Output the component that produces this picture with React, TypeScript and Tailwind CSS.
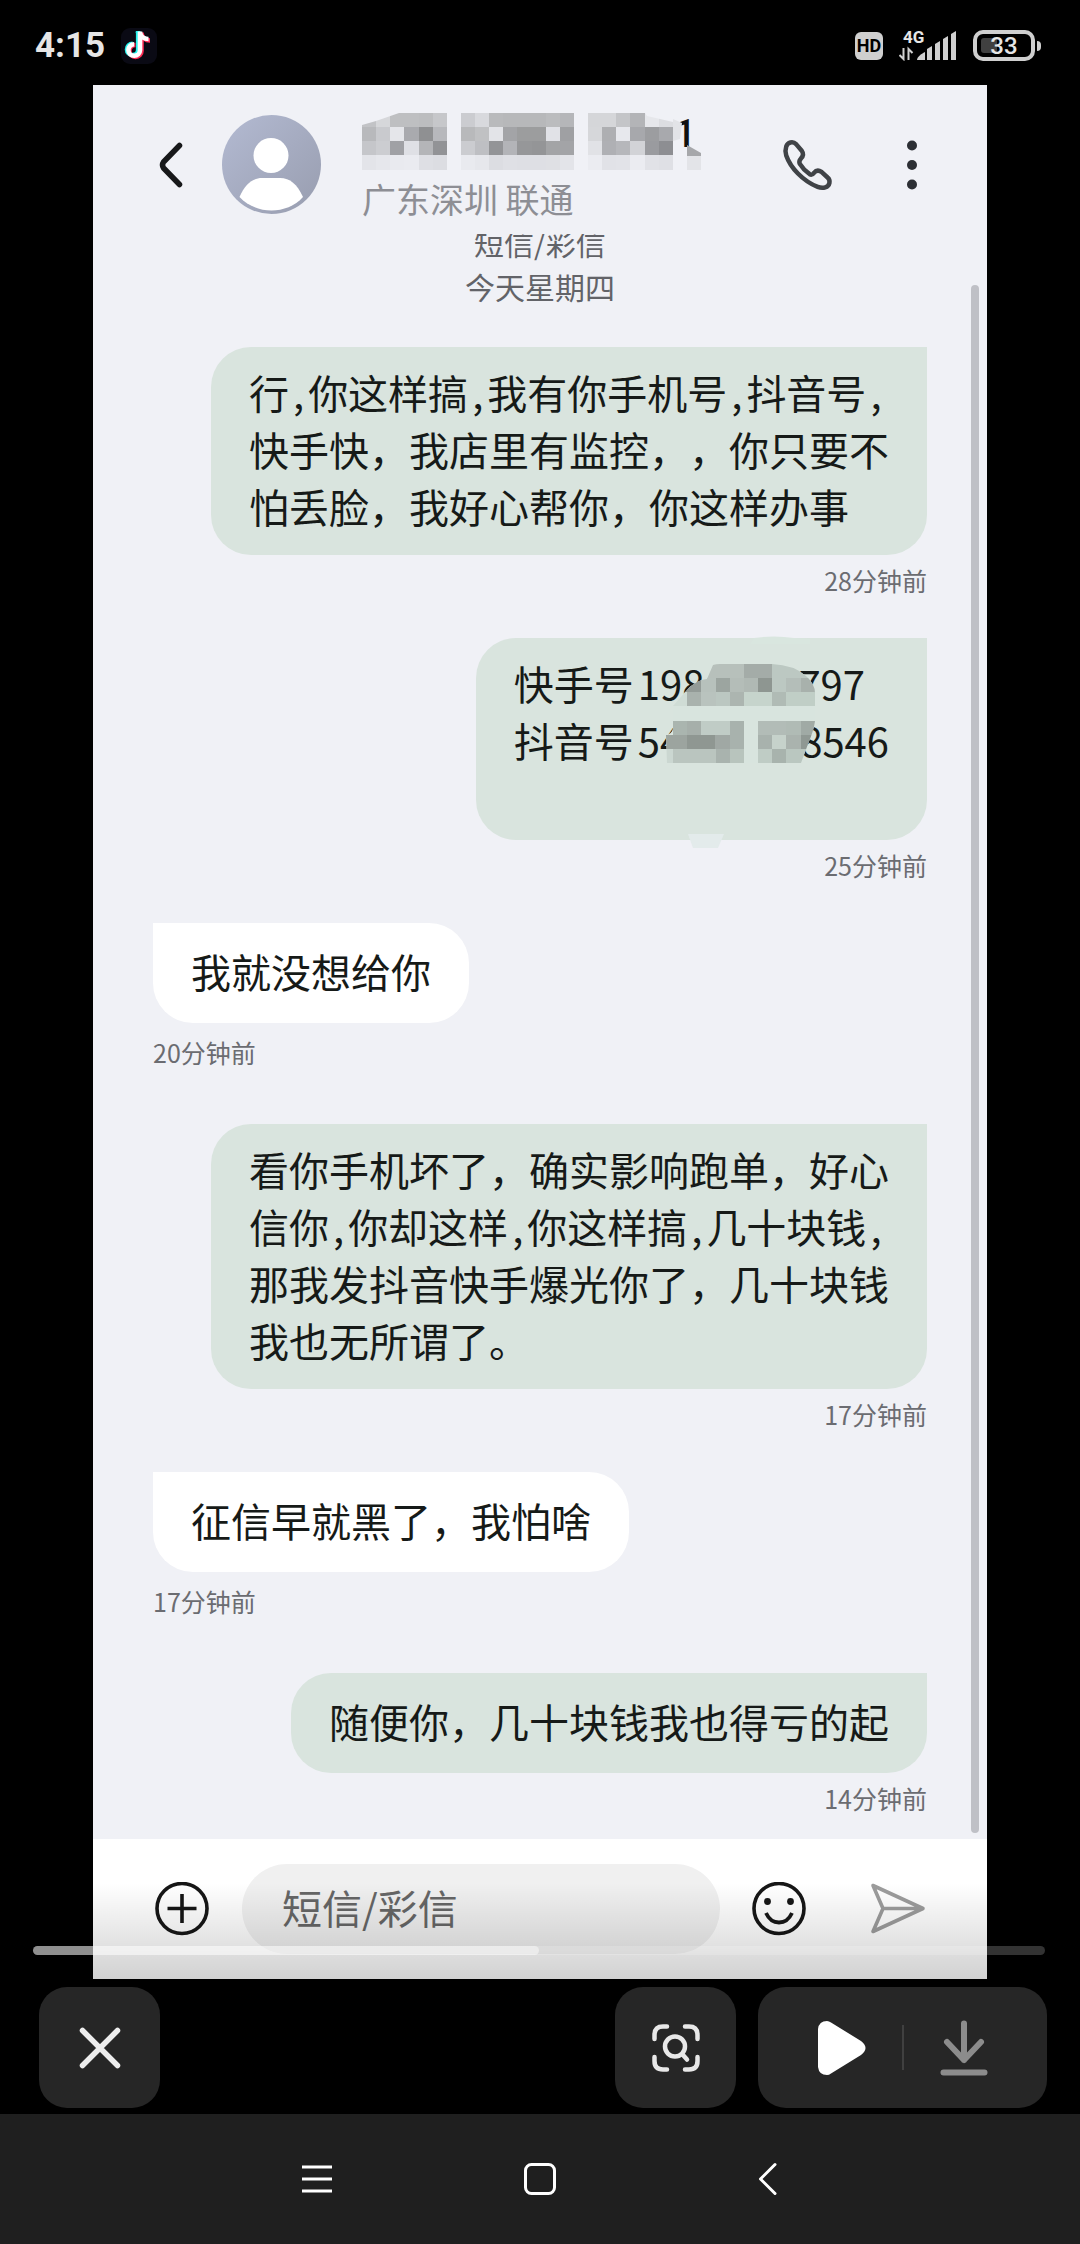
import React from 'react';

type Cell = [x: number, y: number, w: number, fill: string];

interface Message {
  id: number;
  from: 'me' | 'them';
  time: string;
  text?: string;
  accounts?: boolean;
}

const messages: Message[] = [
  {
    id: 1,
    from: 'me',
    time: '28分钟前',
    text: '行,你这样搞,我有你手机号,抖音号,\n快手快，我店里有监控，，你只要不\n怕丢脸，我好心帮你，你这样办事',
  },
  { id: 2, from: 'me', time: '25分钟前', accounts: true },
  { id: 3, from: 'them', time: '20分钟前', text: '我就没想给你' },
  {
    id: 4,
    from: 'me',
    time: '17分钟前',
    text: '看你手机坏了，确实影响跑单，好心\n信你,你却这样,你这样搞,几十块钱,\n那我发抖音快手爆光你了，几十块钱\n我也无所谓了。',
  },
  { id: 5, from: 'them', time: '17分钟前', text: '征信早就黑了，我怕啥' },
  { id: 6, from: 'me', time: '14分钟前', text: '随便你，几十块钱我也得亏的起' },
];

// Rows of the blurred phone number, null is an empty block
const nameRows: (string | null)[][] = [
  [null, '#d6d7da', '#bebfc1', '#bebfc1', '#bcbdbf', '#c6c7ca', null, '#cbccd0', '#d8d9dd', '#b9babc', '#b7b8ba', '#b7b8ba', '#b7b8ba', '#bbbcbe', '#b5b6b9', null, '#d5d6d9', '#d5d6d9', '#c4c5c8', '#b3b4b7', '#e6e7eb', '#dcdde1'],
  ['#b8b9bc', '#c9cace', '#e5e6ea', '#a9aaae', '#8f9092', '#b7b8bc', null, '#b8b9bb', '#c0c1c3', '#e3e4e8', '#a3a4a7', '#9c9d9e', '#9c9d9e', '#e1e2e7', '#9fa0a3', null, '#d6d7da', '#aeafb2', '#e7e8ed', '#a7a8ac', '#9c9da0', '#a8a9ad'],
  ['#c5c6ca', '#cccdd1', '#a0a1a5', '#dfe0e5', '#b4b5b8', '#929396', null, '#cbccd0', '#bebfc3', '#939497', '#b3b4b8', '#969799', '#949597', '#a3a4a6', '#a3a4a7', null, '#e1e2e6', '#afb0b4', '#b6b7bb', '#d2d3d7', '#9a9b9f', '#8d8e92'],
  ['#e3e4e9', '#e6e7ec', '#e9eaef', '#eaebf0', '#dedfe4', '#dcdde2', null, '#e9eaef', '#e6e7ec', '#dcdde2', '#dfe0e5', '#dedfe4', '#dedfe4', '#dfe0e4', '#e3e4e9', null, '#ebecf1', '#e1e2e7', '#e2e3e8', '#ebecf1', '#e1e2e7', '#dfe0e5'],
];

const accountCells: Cell[] = [
  [225, 26, 43, '#b7c0bb'],
  [268, 26, 28, '#a4aca8'],
  [296, 26, 43, '#bcc8c2'],
  [197, 40, 28, '#939b97'],
  [225, 40, 15, '#b7c1bc'],
  [240, 40, 14, '#9ca5a0'],
  [254, 40, 14, '#b4bdb8'],
  [268, 40, 14, '#b0b9b4'],
  [282, 40, 14, '#8e9691'],
  [296, 40, 14, '#bcc8c2'],
  [310, 40, 15, '#b4beb9'],
  [325, 40, 14, '#a8b1ac'],
  [197, 54, 14, '#cfdcd5'],
  [211, 54, 14, '#a9b2ad'],
  [225, 54, 15, '#b9c3be'],
  [240, 54, 14, '#bbc7c1'],
  [254, 54, 14, '#acb5b0'],
  [268, 54, 28, '#c6d4cc'],
  [296, 54, 14, '#b0bbb5'],
  [310, 54, 29, '#c0cec6'],
  [197, 83, 14, '#aab5af'],
  [211, 83, 14, '#a6afaa'],
  [225, 83, 29, '#c0ccc6'],
  [254, 83, 14, '#a8b2ad'],
  [282, 83, 28, '#b2bcb7'],
  [310, 83, 15, '#b0bbb5'],
  [325, 83, 14, '#a0aaa5'],
  [190, 97, 21, '#9ca49f'],
  [211, 97, 28, '#8f9792'],
  [239, 97, 15, '#a0a8a4'],
  [254, 97, 14, '#a8b2ad'],
  [282, 97, 14, '#a8b2ad'],
  [296, 97, 14, '#c6d2cb'],
  [310, 97, 15, '#aab3ae'],
  [325, 97, 14, '#8f9893'],
  [190, 111, 7, '#cbd7d1'],
  [197, 111, 43, '#bac5bf'],
  [240, 111, 14, '#a9b3ae'],
  [254, 111, 14, '#b8c4bd'],
  [282, 111, 14, '#bfccc5'],
  [296, 111, 14, '#a8b3ad'],
  [310, 111, 29, '#bac7c0'],
];

const StatusBar = () => (
  <div className="flex h-[85px] items-center justify-between pt-1.5 pr-[39px] pl-[35px] text-[#e6e6e6]">
    <div className="flex items-center gap-4">
      <span className="font-[Roboto,sans-serif] text-[35px] leading-10 font-bold">4:15</span>
      <svg width="36" height="36" viewBox="0 0 36 36">
        <rect width="36" height="36" rx="9" fill="#0a0a14" />
        <g fill="none" strokeWidth="4.6">
          <path d="M18 3.5V22a5.6 5.6 0 1 1-5.600-5.600M17.500 4c.5 4.500 4 7 8.500 7" stroke="#25f4ee" transform="translate(-.8 -.6)" />
          <path d="M19.500 3.500V22a6 6 0 1 1-6-6M19.500 4c.5 4.500 4 7.500 8.500 7.500" stroke="#fe2c55" transform="translate(1 1)" />
          <path d="M19 3.500V22a5.800 5.800 0 1 1-5.800-5.800M19 4c.5 4.500 4 7 8.500 7" stroke="#fff" />
        </g>
      </svg>
    </div>
    <div className="flex items-center font-[Roboto,sans-serif]">
      <span className="mr-4 flex h-7 w-7 items-center justify-center rounded-md bg-[#cfcfcf] text-[18px] font-bold text-black">HD</span>
      <span className="relative mr-4 h-[30px] w-[58px]">
        <span className="absolute -top-1 left-1 text-[17px] leading-5 font-bold">4G</span>
        <svg className="absolute inset-0" width="58" height="30" viewBox="0 0 58 30">
          <g fill="#d0d0d0">
            <path d="M18 29c0-3 4-6 8-8v8z" />
            <path d="M28 18l5-3v14h-5z" />
            <path d="M36 13l5-3v19h-5z" />
            <path d="M44 8l5-3v24h-5z" />
            <path d="M52 3l5-3v29h-5z" />
          </g>
          <path d="M4.500 17v11l-4-4M9.500 29V18l4 4" fill="none" stroke="#d0d0d0" strokeWidth="2" />
        </svg>
      </span>
      <span className="relative flex h-[31px] w-[62px] items-center justify-center rounded-[10px] border-4 border-[#cfcfcf]">
        <span className="absolute top-1 left-1 h-[15px] w-4 rounded-[3px] bg-[#404040]" />
        <span className="relative text-[24px] leading-6 font-medium">33</span>
      </span>
      <span className="ml-0.5 h-2.5 w-1 rounded-r-full bg-[#cfcfcf]" />
    </div>
  </div>
);

const NameMosaic = () => (
  <svg className="absolute inset-0" width="340" height="57" viewBox="0 0 340 57">
    <path d="M0 14V12l14-4v6z" fill="#c2c3c6" />
    {nameRows.map((row, y) =>
      row.map((fill, x) =>
        fill ? (
          <rect
            key={`${x}-${y}`}
            x={Math.round(x * 14.13)}
            y={Math.round(y * 14.13)}
            width={Math.round((x + 1) * 14.13) - Math.round(x * 14.13)}
            height={Math.round((y + 1) * 14.13) - Math.round(y * 14.13)}
            fill={fill}
          />
        ) : null
      )
    )}
    <path d="M14 0h23L14 8z M283 0h28v9l-26-6z" fill="#f0f1f6" />
    <path d="M311 6l9 4-2 16-7 2z" fill="#e2e3e7" />
    <path d="M325 32l14 8v3h-14z" fill="#a6a7aa" />
    <path d="M325 43h14v14h-14z" fill="#e3e4e8" />
  </svg>
);

const Header = () => (
  <header className="relative flex h-[149px] bg-[#f0f1f6] pr-[63px] pl-[62px]">
    <button aria-label="返回" className="mt-[54px] h-[52px] w-9">
      <svg width="36" height="52" viewBox="0 0 36 52" fill="none" stroke="#17181a" strokeWidth="5.500" strokeLinecap="round" strokeLinejoin="round">
        <path d="M24.500 6.500L8.500 23q-2 3 0 6L24.500 45.500" />
      </svg>
    </button>
    <svg className="mt-[30px] ml-[31px]" width="99" height="99" viewBox="0 0 99 99">
      <defs>
        <linearGradient id="avatar" x1="0" y1="0" x2="1" y2="1">
          <stop offset="0" stopColor="#b3bad2" />
          <stop offset="1" stopColor="#989daf" />
        </linearGradient>
      </defs>
      <circle cx="49.500" cy="49.500" r="49.500" fill="url(#avatar)" />
      <circle cx="49" cy="40.500" r="17.500" fill="#fff" />
      <path d="M17.500 82C23 69 31 63 40 63h18c10 0 17 6 23 19C73 91 61 95.500 49.500 95.500S26 91 17.500 82z" fill="#fff" />
    </svg>
    <div className="mt-7 ml-[41px] flex flex-col">
      <div className="relative flex h-[57px] w-[340px] justify-end pr-1.5">
        <span className="font-[Roboto,sans-serif] text-[38px] leading-[42px] font-medium text-[#111]">1</span>
        <NameMosaic />
      </div>
      <span className="mt-1 text-[34px] leading-[50px] text-[#8d8e94]">广东深圳 联通</span>
    </div>
    <div className="mt-[54px] ml-auto flex h-[52px] items-center">
      <button aria-label="拨打电话">
        <svg width="52" height="52" viewBox="0 0 52 52" fill="none" stroke="#404347" strokeWidth="4.800" strokeLinejoin="round">
          <path d="M4.500 8.500C6 4 11.500 2.500 15 6l6 7c2.500 3.500 1.500 6-1 8.500-1.800 2-2 3.500-1 5.500 3 5 6 8 10.500 11 1.800 1 3 .5 4.500-1.500 2-2.500 4.500-3.500 8-1l6.500 6c3.500 3 2.500 9-2.500 10.500-3 1-5.500.5-8-.5C22 45 9 31 4.500 18c-1-3-1-6.500 0-9.500z" transform="translate(1 -.5) scale(.94)" />
        </svg>
      </button>
      <button aria-label="更多" className="ml-[67px]">
        <svg width="24" height="52" viewBox="0 0 24 52" fill="#2c2f34">
          <circle cx="12" cy="6.500" r="5" />
          <circle cx="12" cy="26" r="5" />
          <circle cx="12" cy="45.500" r="5" />
        </svg>
      </button>
    </div>
  </header>
);

// Half-width commas get a little room on both sides
const MessageText = ({ text }: { text: string }) => (
  <p className="whitespace-pre-line">
    {text.split(/(,)/).map((part, index) =>
      part === ',' ? (
        <span key={index} className="mx-1">,</span>
      ) : (
        <React.Fragment key={index}>{part}</React.Fragment>
      )
    )}
  </p>
);

const AccountText = () => (
  <>
    <div className="pb-[51px]">
      <div className="flex">
        <span className="mr-1">快手号</span>
        <span>198</span>
        <span className="w-[94px]" />
        <span>797</span>
      </div>
      <div className="flex">
        <span className="mr-1">抖音号</span>
        <span>54</span>
        <span className="w-[118px]" />
        <span>8546</span>
      </div>
    </div>
    <svg className="absolute top-0 left-0 overflow-visible" width="451" height="208" viewBox="0 0 451 208">
      <defs>
        <clipPath id="smudge">
          <path d="M197 68L211 52Q220 42 231 41L237 27Q240 26 244 26H296Q318 27 330 38Q339 46 339 55V83Q338 92 332 106L325 125H191L190 97Q196 96 197 90z" />
        </clipPath>
      </defs>
      <path d="M278 0q20-3 40 0l16 1v5h-60z" fill="#d9e6df" />
      <g clipPath="url(#smudge)">
        <rect x="190" y="26" width="150" height="100" fill="#d8e4de" />
        {accountCells.map(([x, y, w, fill]) => (
          <rect key={`${x}-${y}`} x={x} y={y} width={w} height={y === 40 || y === 26 ? 15 : 14} fill={fill} />
        ))}
      </g>
      <path d="M212 196h36l-6 14h-25z" fill="#e3ebeb" />
    </svg>
  </>
);

const Bubble = ({ message }: { message: Message }) => {
  const mine = message.from === 'me';
  return (
    <li className={`flex flex-col ${mine ? 'items-end pb-[38px]' : 'items-start pb-[52px]'}`}>
      <div
        className={`relative flex min-h-[100px] items-center rounded-[40px] px-[38px] pt-[17px] pb-5 text-[40px] leading-[57px] text-[#161a18] ${
          mine ? 'rounded-tr-none bg-[#d9e4de]' : 'rounded-tl-none bg-white'
        }`}
      >
        {message.accounts ? <AccountText /> : <MessageText text={message.text ?? ''} />}
      </div>
      <time className={`text-[25px] leading-10 text-[#6b6c71] ${mine ? 'mt-[5px]' : 'mt-[9px]'}`}>{message.time}</time>
    </li>
  );
};

const Composer = () => (
  <form className="relative flex items-center bg-white py-[25px] pr-[60px] pl-[62px]">
    <button type="button" aria-label="添加">
      <svg width="54" height="54" viewBox="0 0 54 54" fill="none" stroke="#161616">
        <circle cx="27" cy="26.500" r="25" strokeWidth="3.600" />
        <path d="M27 12v29M12.500 26.500h29" strokeWidth="3.600" />
      </svg>
    </button>
    <input
      aria-label="短信/彩信"
      placeholder="短信/彩信"
      className="ml-[33px] h-[90px] min-w-0 flex-1 rounded-full bg-[#f0f0f0] px-10 pb-1 text-[40px] text-[#222] placeholder:text-[#666]"
    />
    <button type="button" aria-label="表情" className="ml-8">
      <svg width="54" height="54" viewBox="0 0 54 54" fill="none" stroke="#161616">
        <circle cx="27" cy="26.500" r="25" strokeWidth="3.600" />
        <circle cx="15.500" cy="19.500" r="3.400" fill="#161616" stroke="none" />
        <circle cx="38.500" cy="19.500" r="3.400" fill="#161616" stroke="none" />
        <path d="M14 31C17 37.500 21.500 40.500 27 40.500s10-3 13-9.500" strokeWidth="3.800" />
      </svg>
    </button>
    <button type="submit" aria-label="发送" className="ml-[63px]">
      <svg width="58" height="54" viewBox="0 0 58 54" fill="none" stroke="#9c9c9c" strokeWidth="3.600" strokeLinejoin="round" strokeLinecap="round">
        <path d="M4 3.500L54 26.500 4 49.500 14 26.500zM14 26.500h38" />
      </svg>
    </button>
    <div className="pointer-events-none absolute inset-x-0 bottom-0 h-24 bg-linear-to-t from-black/18 to-transparent" />
  </form>
);

const ViewerControls = () => (
  <div className="flex items-center pt-2 pr-[33px] pb-1.5 pl-[39px]">
    <button aria-label="关闭" className="flex h-[121px] w-[121px] items-center justify-center rounded-[28px] bg-[#262626]">
      <svg width="42" height="42" viewBox="0 0 42 42" stroke="#ededed" strokeWidth="5.500" strokeLinecap="round">
        <path d="M3.500 3.500l35 35M38.500 3.500l-35 35" />
      </svg>
    </button>
    <button aria-label="识图" className="ml-auto flex h-[121px] w-[121px] items-center justify-center rounded-[28px] bg-[#262626]">
      <svg width="48" height="48" viewBox="0 0 48 48" fill="none" stroke="#e8e8e8" strokeWidth="4.500" strokeLinecap="round">
        <path d="M2.500 15v-4q0-8.500 8.500-8.500h4M33 2.500h4q8.500 0 8.500 8.500v4M45.500 33v4q0 8.500-8.500 8.500h-4M15 45.500h-4q-8.500 0-8.500-8.500v-4" />
        <circle cx="23" cy="22.500" r="10" />
        <path d="M31 31l4 4.500" />
      </svg>
    </button>
    <div className="ml-[22px] flex h-[121px] w-[289px] items-center justify-center gap-9 rounded-[28px] bg-[#262626]">
      <button aria-label="播放">
        <svg width="48" height="54" viewBox="0 0 48 54" fill="#fff">
          <path d="M0 8Q1 0 9 0q2 0 4 1.500L43 20q9 7 0 14L13 52.500Q11 54 9 54 1 54 0 46z" />
        </svg>
      </button>
      <span className="h-[45px] w-0.5 bg-[#404040]" />
      <button aria-label="下载">
        <svg width="48" height="56" viewBox="0 0 48 56" fill="none" stroke="#8c8c8c" strokeWidth="6" strokeLinecap="round" strokeLinejoin="round">
          <path d="M24 3.500V40M7 22l17 18 17-18M3.500 52.500h41" />
        </svg>
      </button>
    </div>
  </div>
);

const NavBar = () => (
  <nav className="flex h-[130px] items-center justify-center gap-[165px] bg-[#1f1f1f]">
    <button aria-label="最近任务" className="flex w-[60px] justify-center">
      <svg width="34" height="34" viewBox="0 0 34 34" stroke="#fff" strokeWidth="3">
        <path d="M4 5h30M4 17h30M4 29h30" />
      </svg>
    </button>
    <button aria-label="主屏幕" className="flex w-[60px] justify-center">
      <svg width="34" height="34" viewBox="0 0 34 34" fill="none" stroke="#fff" strokeWidth="3">
        <rect x="2.500" y="2.500" width="29" height="29" rx="6" />
      </svg>
    </button>
    <button aria-label="返回上一级" className="flex w-[60px] justify-center">
      <svg width="24" height="34" viewBox="0 0 24 34" fill="none" stroke="#fff" strokeWidth="3" strokeLinecap="round" strokeLinejoin="round">
        <path d="M22 2.500L7.500 17 22 31.500" />
      </svg>
    </button>
  </nav>
);

const App: React.FC = () => {
  return (
    <div className="min-h-screen bg-black font-['Noto_Sans_CJK_SC',sans-serif] [text-spacing-trim:space-all]">
      <StatusBar />
      <div className="relative px-[93px]">
        <main className="bg-[#f0f1f6]">
          <Header />
          <section className="relative overflow-hidden pr-[60px] pb-[21px] pl-[60px]">
            <div className="-mt-[14px] mb-[39px] flex flex-col items-center text-[30px] leading-[44px] text-[#626368]">
              <span>短信/彩信</span>
              <span>今天星期四</span>
            </div>
            <ul className="-mb-[38px]">
              {messages.map((message) => (
                <Bubble key={message.id} message={message} />
              ))}
            </ul>
            <div className="absolute top-[51px] right-2 bottom-1.5 w-2 rounded-full bg-[#bfc0c6]" />
          </section>
          <Composer />
        </main>
        <div className="absolute right-[35px] bottom-6 left-[33px] h-[9px] rounded-full bg-white/20">
          <div className="h-full w-1/2 rounded-full bg-white/45" />
        </div>
      </div>
      <ViewerControls />
      <NavBar />
    </div>
  );
};

export default App;
